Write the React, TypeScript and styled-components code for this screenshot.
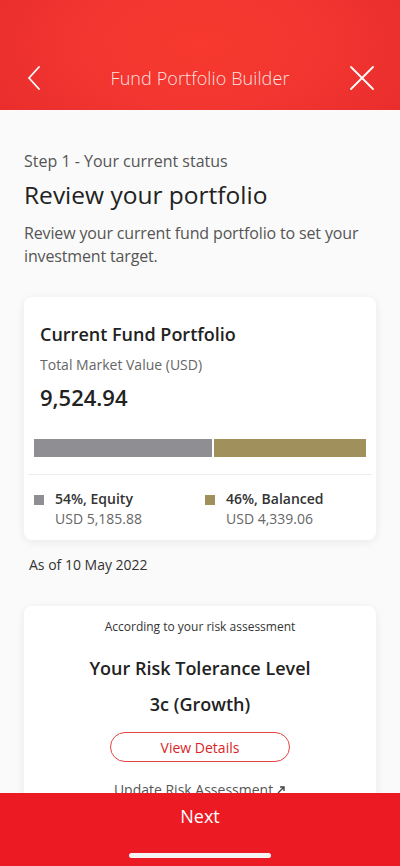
import React from "react";
import styled, { createGlobalStyle } from "styled-components";

const Global = createGlobalStyle`
  html, body { margin: 0; padding: 0; background: #fafafa; }
  body { font-family: "Open Sans", "Noto Sans", sans-serif; -webkit-font-smoothing: antialiased; }
  * { box-sizing: border-box; }
`;

const Screen = styled.div`
  width: 400px;
  height: 866px;
  display: flex;
  flex-direction: column;
  overflow: hidden;
  background: #fafafa;
`;

const Header = styled.header`
  height: 110px;
  flex: none;
  background: radial-gradient(ellipse 70% 140% at 50% 40%, #f7392f 0%, #f23530 45%, #e42a2b 100%);
  display: flex;
  align-items: flex-end;
  padding: 0 20px 4px 16px;
`;

const HeaderRow = styled.div`
  flex: 1;
  height: 56px;
  display: flex;
  align-items: center;
  justify-content: space-between;
`;

const IconButton = styled.button`
  width: 36px;
  height: 36px;
  border: 0;
  padding: 0;
  background: transparent;
  display: flex;
  align-items: center;
  justify-content: center;
`;

const HeaderTitle = styled.h1`
  margin: 0 0 0 4px;
  font-size: 18px;
  font-weight: 300;
  color: rgba(255, 255, 255, 0.88);
  letter-spacing: 0.1px;
`;

const Main = styled.main`
  flex: 1;
  overflow: hidden;
  padding: 40px 24px 0 24px;
`;

const StepLabel = styled.div`
  font-size: 16px;
  line-height: 22px;
  color: #555;
`;

const PageTitle = styled.h2`
  margin: 7px 0 0 0;
  font-size: 24.5px;
  line-height: 32px;
  font-weight: 400;
  color: #222;
`;

const Description = styled.p`
  margin: 11px 0 0 0;
  font-size: 16px;
  line-height: 23px;
  letter-spacing: -0.15px;
  color: #555;
`;

const Card = styled.section<{ $mt: number }>`
  margin-top: ${(p) => p.$mt}px;
  background: #fff;
  border-radius: 8px;
  box-shadow: 0 2px 10px rgba(0, 0, 0, 0.07);
`;

const PortfolioCard = styled(Card)`
  padding: 25px 10px 11px 10px;
`;

const CardHead = styled.div`
  padding: 0 6px;
`;

const CardTitle = styled.h3`
  margin: 0;
  font-size: 18px;
  line-height: 24px;
  font-weight: 600;
  color: #222;
`;

const SubLabel = styled.div`
  margin-top: 9px;
  font-size: 14px;
  line-height: 20px;
  color: #666;
`;

const TotalValue = styled.div`
  margin-top: 7px;
  font-size: 22px;
  line-height: 30px;
  font-weight: 600;
  color: #222;
`;

const Bar = styled.div`
  margin-top: 27px;
  height: 18px;
  display: flex;
  gap: 2px;
`;

const Segment = styled.div<{ $color: string }>`
  height: 100%;
  background: ${(p) => p.$color};
`;

const Divider = styled.hr`
  margin: 17px -6px 0 -6px;
  border: 0;
  border-top: 1px solid #ececec;
`;

const Legend = styled.div`
  margin-top: 14px;
  display: grid;
  grid-template-columns: 171px 1fr;
`;

const LegendItem = styled.div`
  display: flex;
  gap: 11px;
`;

const Swatch = styled.span<{ $color: string }>`
  flex: none;
  width: 10px;
  height: 10px;
  margin-top: 6px;
  background: ${(p) => p.$color};
`;

const LegendText = styled.div`
  display: flex;
  flex-direction: column;
`;

const LegendName = styled.span`
  font-size: 14px;
  line-height: 20px;
  font-weight: 600;
  color: #333;
`;

const LegendValue = styled.span`
  font-size: 14px;
  line-height: 20px;
  color: #666;
`;

const AsOf = styled.div`
  margin-top: 15px;
  padding-left: 5px;
  font-size: 14px;
  line-height: 20px;
  color: #333;
`;

const RiskCard = styled(Card)`
  padding: 12px 16px 20px 16px;
  display: flex;
  flex-direction: column;
  align-items: center;
  text-align: center;
`;

const RiskIntro = styled.div`
  font-size: 12px;
  line-height: 18px;
  color: #333;
`;

const RiskTitle = styled.div<{ $mt: number }>`
  margin-top: ${(p) => p.$mt}px;
  font-size: 18px;
  line-height: 26px;
  font-weight: 600;
  color: #222;
`;

const OutlineButton = styled.button`
  margin-top: 15px;
  width: 180px;
  height: 30px;
  border: 1px solid #e24343;
  border-radius: 15px;
  background: #fff;
  color: #db1f26;
  font-family: inherit;
  font-size: 14px;
`;

const LinkText = styled.div`
  margin-top: 18px;
  font-size: 14px;
  line-height: 20px;
  color: #555;
  display: flex;
  align-items: center;
  gap: 3px;
`;

const Footer = styled.footer`
  flex: none;
  height: 73px;
  background: #ec1a23;
  display: flex;
  flex-direction: column;
  align-items: center;
  padding-top: 11px;
`;

const NextLabel = styled.div`
  font-size: 18px;
  line-height: 24px;
  color: #fff;
`;

const HomeIndicator = styled.div`
  margin-top: 25px;
  width: 142px;
  height: 5px;
  border-radius: 3px;
  background: #f4f4f4;
`;

export default function App() {
  return (
    <>
      <Global />
      <Screen>
        <Header>
          <HeaderRow>
            <IconButton aria-label="Back">
              <svg width="16" height="24" viewBox="0 0 16 24" fill="none">
                <path d="M13 1 L3 12 L13 23" stroke="#fff" strokeWidth="1.8" strokeLinecap="round" strokeLinejoin="round" />
              </svg>
            </IconButton>
            <HeaderTitle>Fund Portfolio Builder</HeaderTitle>
            <IconButton aria-label="Close">
              <svg width="26" height="26" viewBox="0 0 26 26" fill="none">
                <path d="M2 2 L24 24 M24 2 L2 24" stroke="#fff" strokeWidth="1.8" strokeLinecap="round" />
              </svg>
            </IconButton>
          </HeaderRow>
        </Header>
        <Main>
          <StepLabel>Step 1 - Your current status</StepLabel>
          <PageTitle>Review your portfolio</PageTitle>
          <Description>Review your current fund portfolio to set your investment target.</Description>

          <PortfolioCard $mt={29}>
            <CardHead>
              <CardTitle>Current Fund Portfolio</CardTitle>
              <SubLabel>Total Market Value (USD)</SubLabel>
              <TotalValue>9,524.94</TotalValue>
            </CardHead>
            <Bar>
              <Segment $color="#8f8e92" style={{ flex: 54 }} />
              <Segment $color="#a0915c" style={{ flex: 46 }} />
            </Bar>
            <Divider />
            <Legend>
              <LegendItem>
                <Swatch $color="#8f8e92" />
                <LegendText>
                  <LegendName>54%, Equity</LegendName>
                  <LegendValue>USD 5,185.88</LegendValue>
                </LegendText>
              </LegendItem>
              <LegendItem>
                <Swatch $color="#a0915c" />
                <LegendText>
                  <LegendName>46%, Balanced</LegendName>
                  <LegendValue>USD 4,339.06</LegendValue>
                </LegendText>
              </LegendItem>
            </Legend>
          </PortfolioCard>

          <AsOf>As of 10 May 2022</AsOf>

          <RiskCard $mt={31}>
            <RiskIntro>According to your risk assessment</RiskIntro>
            <RiskTitle $mt={19}>Your Risk Tolerance Level</RiskTitle>
            <RiskTitle $mt={10}>3c (Growth)</RiskTitle>
            <OutlineButton>View Details</OutlineButton>
            <LinkText>
              Update Risk Assessment
              <svg width="10" height="10" viewBox="0 0 10 10" fill="none">
                <path d="M2 8 L8 2 M4 2 H8 V6" stroke="#444" strokeWidth="1.4" />
              </svg>
            </LinkText>
          </RiskCard>
        </Main>
        <Footer>
          <NextLabel>Next</NextLabel>
          <HomeIndicator />
        </Footer>
      </Screen>
    </>
  );
}
